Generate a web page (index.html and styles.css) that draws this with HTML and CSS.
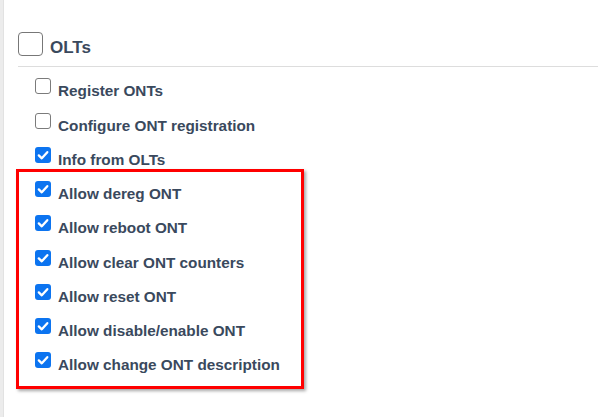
FILE: index.html
```html
<!DOCTYPE html>
<html lang="en">
<head>
<meta charset="utf-8">
<title>OLTs permissions</title>
<link rel="stylesheet" href="styles.css">
</head>
<body>
<div class="page">
  <div class="side-strip"></div>
  <main class="content">
    <div class="group-header">
      <span class="box box-lg"></span>
      <span class="group-title">OLTs</span>
    </div>
    <hr class="rule">
    <div class="perm-list">
      <label class="perm"><span class="box"></span><span class="perm-text">Register ONTs</span></label>
      <label class="perm"><span class="box"></span><span class="perm-text">Configure ONT registration</span></label>
      <label class="perm"><span class="box checked"><svg viewBox="0 0 16 16"><path d="M3.8 8.4 L6.8 11.3 L12.3 5.2"/></svg></span><span class="perm-text">Info from OLTs</span></label>
      <div class="highlight">
        <label class="perm"><span class="box checked"><svg viewBox="0 0 16 16"><path d="M3.8 8.4 L6.8 11.3 L12.3 5.2"/></svg></span><span class="perm-text">Allow dereg ONT</span></label>
        <label class="perm"><span class="box checked"><svg viewBox="0 0 16 16"><path d="M3.8 8.4 L6.8 11.3 L12.3 5.2"/></svg></span><span class="perm-text">Allow reboot ONT</span></label>
        <label class="perm"><span class="box checked"><svg viewBox="0 0 16 16"><path d="M3.8 8.4 L6.8 11.3 L12.3 5.2"/></svg></span><span class="perm-text">Allow clear ONT counters</span></label>
        <label class="perm"><span class="box checked"><svg viewBox="0 0 16 16"><path d="M3.8 8.4 L6.8 11.3 L12.3 5.2"/></svg></span><span class="perm-text">Allow reset ONT</span></label>
        <label class="perm"><span class="box checked"><svg viewBox="0 0 16 16"><path d="M3.8 8.4 L6.8 11.3 L12.3 5.2"/></svg></span><span class="perm-text">Allow disable/enable ONT</span></label>
        <label class="perm"><span class="box checked"><svg viewBox="0 0 16 16"><path d="M3.8 8.4 L6.8 11.3 L12.3 5.2"/></svg></span><span class="perm-text">Allow change ONT description</span></label>
      </div>
    </div>
  </main>
</div>
</body>
</html>
```

FILE: styles.css
```css
* { box-sizing: border-box; }

html, body {
  margin: 0;
  padding: 0;
  background: #ffffff;
}

body {
  font-family: "Liberation Sans", Arial, sans-serif;
  color: #3a495d;
  width: 614px;
  height: 417px;
  overflow: hidden;
}

.page {
  display: flex;
  height: 417px;
}

.side-strip {
  width: 4px;
  flex: 0 0 4px;
  background: #ececec;
  border-right: 1px solid #e2e2e2;
}

.content {
  flex: 1;
  padding: 32px 16px 0 14px;
}

.group-header {
  display: flex;
  align-items: flex-end;
  gap: 7px;
}

.group-title {
  font-size: 17px;
  font-weight: 700;
  line-height: 19px;
  margin-bottom: -1px;
}

.rule {
  border: 0;
  border-top: 1px solid #dddddd;
  margin: 10px 0 0 0;
  height: 0;
}

.perm-list {
  display: flex;
  flex-direction: column;
  gap: 10.25px;
  padding: 11.3px 0 0 17px;
}

.perm {
  display: flex;
  align-items: flex-start;
  gap: 7px;
}

.perm-text {
  font-size: 15.3px;
  font-weight: 700;
  line-height: 22px;
  margin-top: 2px;
  height: 22px;
}

.box {
  display: inline-flex;
  align-items: center;
  justify-content: center;
  flex: 0 0 16px;
  width: 16px;
  height: 16px;
  border: 1.5px solid #7b7b7b;
  border-radius: 3px;
  background: #ffffff;
}

.box-lg {
  flex: 0 0 25px;
  width: 25px;
  height: 24px;
  border-radius: 4px;
  border-color: #777777;
}

.box.checked {
  background: #0c74f0;
  border: 0;
}

.box svg {
  width: 16px;
  height: 16px;
}

.box svg path {
  fill: none;
  stroke: #ffffff;
  stroke-width: 2.3;
  stroke-linecap: round;
  stroke-linejoin: round;
}

.highlight {
  display: flex;
  flex-direction: column;
  gap: 10.25px;
  margin: -12.55px 0 0 -19px;
  width: 288px;
  border: 3px solid #ff0000;
  padding: 9.7px 0 9.7px 16px;
  box-shadow: 2px 2px 3px rgba(0, 0, 0, 0.35);
}
```
